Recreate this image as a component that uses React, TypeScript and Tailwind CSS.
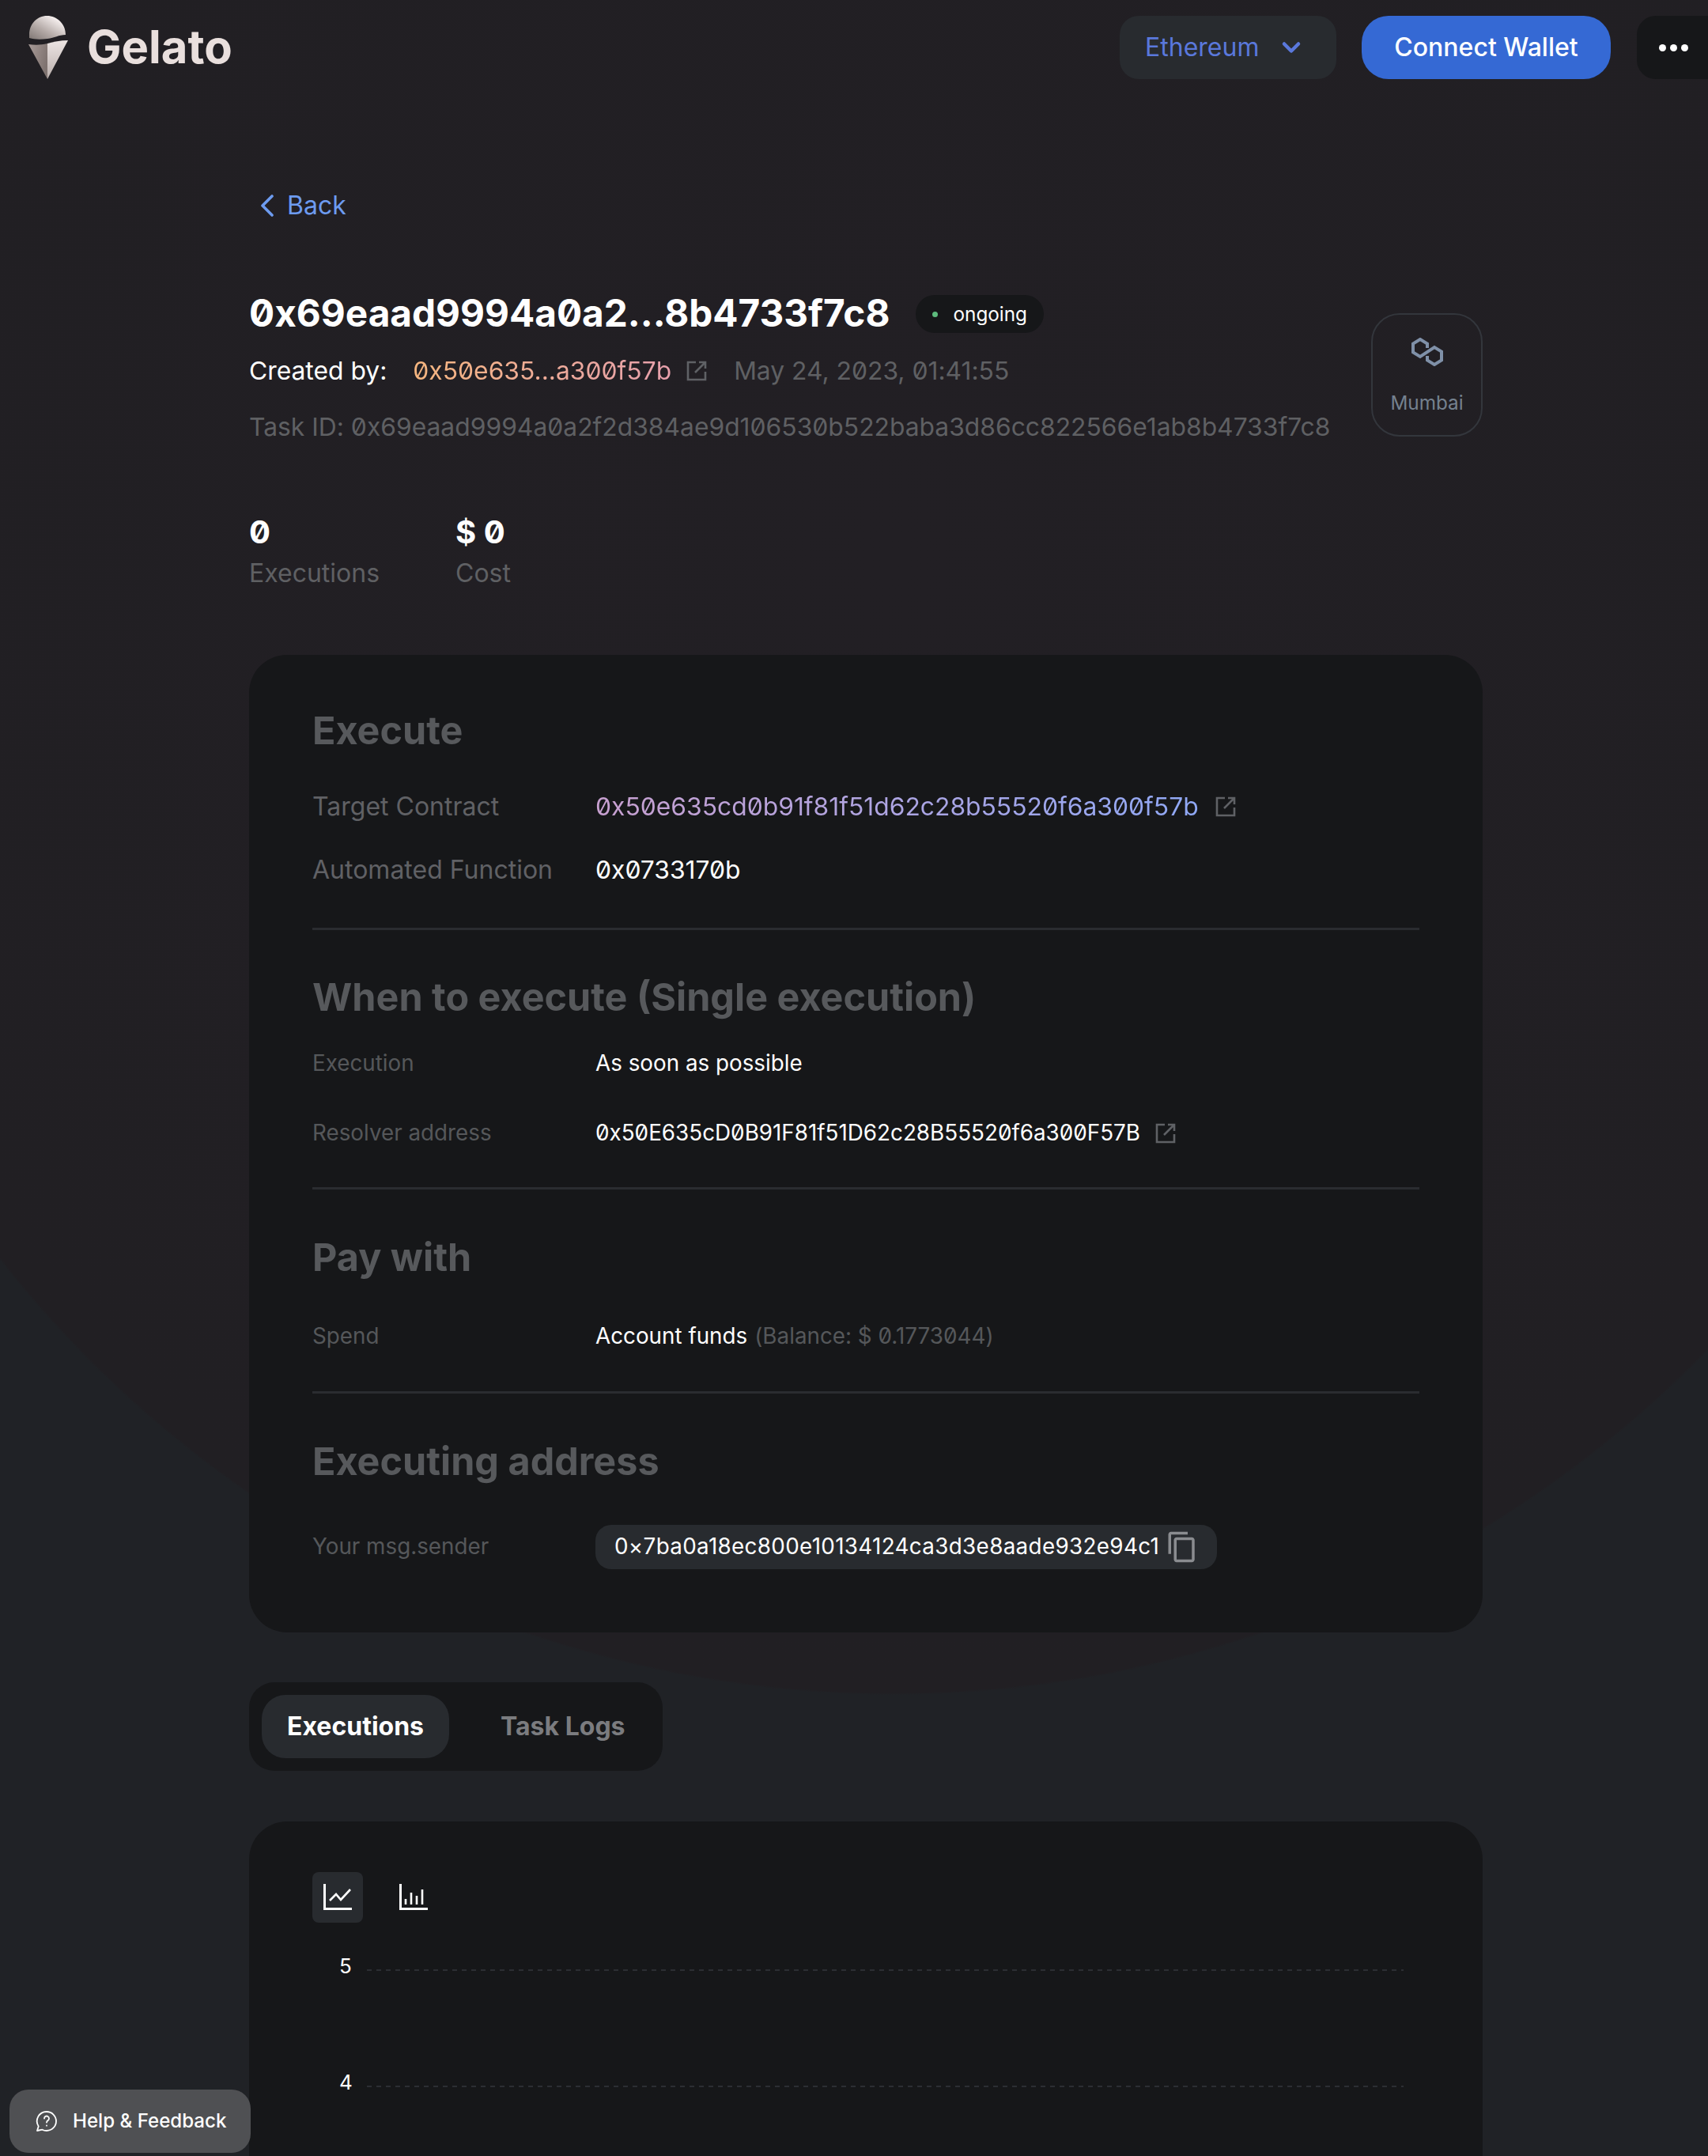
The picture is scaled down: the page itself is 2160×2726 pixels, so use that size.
import { ChevronDown } from 'lucide-react';
import { MdContentCopy } from 'react-icons/md';
import type { ReactNode } from 'react';

const sans = "font-['Inter','Liberation_Sans',sans-serif]";
const hash = "slashed-zero [font-feature-settings:'zero','calt'_0]";

function GelatoLogo() {
  return (
    <svg width="50" height="80" viewBox="0 0 50 80">
      <defs>
        <linearGradient id="dome" x1="0" y1="1" x2="0.85" y2="0.1">
          <stop offset="0" stopColor="#7f7673" />
          <stop offset="0.45" stopColor="#b5aba8" />
          <stop offset="1" stopColor="#fff9f8" />
        </linearGradient>
        <linearGradient id="coneLeft" x1="0" y1="0" x2="1" y2="0.4">
          <stop offset="0" stopColor="#a89b98" />
          <stop offset="1" stopColor="#7f7370" />
        </linearGradient>
        <linearGradient id="coneRight" x1="0" y1="0" x2="0" y2="1">
          <stop offset="0" stopColor="#ece4e3" />
          <stop offset="1" stopColor="#b9aeab" />
        </linearGradient>
      </defs>
      <path d="M1 24C1 10 11 0 23.5 0S47 10 47 24C38 24 33 28 24 29 15 30 8 30 1 28Z" fill="url(#dome)" />
      <path d="M0 36C8 37 16 37 24 35L24 80Z" fill="url(#coneLeft)" />
      <path d="M24 35C32 33 40 31 50 31L24 80Z" fill="url(#coneRight)" />
    </svg>
  );
}

function BackChevron() {
  return (
    <svg width="20" height="30" viewBox="0 0 20 30" fill="none" stroke="#6d9bf0" strokeWidth="3.600" strokeLinecap="round" strokeLinejoin="round">
      <path d="M16 3 4 15l12 12" />
    </svg>
  );
}

function ExternalIcon({ className }: { className?: string }) {
  return (
    <svg viewBox="0 0 28 28" fill="none" stroke="#5f6165" strokeWidth="2.600" className={className}>
      <path d="M13 3H3v22h22V15" />
      <path d="M12 16 25 3M17 3h8v8" />
    </svg>
  );
}

function PolygonIcon() {
  return (
    <svg width="40" height="36" viewBox="0 0 40 36" fill="none" stroke="#7f90a8" strokeWidth="4">
      <path d="M20 13V7.500L11 2 2 7.500v11L11 24l18-12 9 5.500v11L29 34l-9-5.500V23" />
    </svg>
  );
}

function LineChartIcon() {
  return (
    <svg width="36" height="34" viewBox="0 0 36 34" fill="none" stroke="#fff">
      <path d="M1.500 0v31.500H36" strokeWidth="3" />
      <path d="M8 21l8-8 6 7L34 7" strokeWidth="2.600" />
    </svg>
  );
}

function BarChartIcon() {
  return (
    <svg width="36" height="34" viewBox="0 0 36 34" fill="none" stroke="#fff">
      <path d="M1.500 0v31.500H36" strokeWidth="3" />
      <path d="M8 26v-7M15 26V11M22 26V15M29 26V7" strokeWidth="2.600" />
    </svg>
  );
}

function HelpIcon() {
  return (
    <svg width="28" height="28" viewBox="0 0 28 28" fill="none" stroke="#fff" strokeWidth="1.800" strokeLinecap="round" strokeLinejoin="round">
      <path d="M14 2a12 12 0 0 1 0 24c-2 0-4-.400-5.500-1.300L2 26l1.700-5.500A12 12 0 0 1 14 2Z" />
      <path d="M11 10.500a3 3 0 1 1 4.500 2.600c-1 .600-1.500 1.200-1.500 2.400" />
      <path d="M14 19.500v.200" />
    </svg>
  );
}

function Row({ label, height, labelClass, children }: { label: string; height: string; labelClass: string; children: ReactNode }) {
  return (
    <div className={`flex items-center ${height}`}>
      <div className={`w-[358px] shrink-0 ${labelClass}`}>{label}</div>
      {children}
    </div>
  );
}

function Heading({ children, className }: { children: ReactNode; className?: string }) {
  return <h2 className={`text-[48.500px] leading-[58px] font-bold text-[#57595c] ${className ?? ''}`}>{children}</h2>;
}

const small = 'text-[27.800px] text-[#55575a]';
const large = 'text-[32px] text-[#606165]';
const divider = 'h-[3px] bg-[#2a2c30]';
const gridLine = 'mt-[12px] h-[2px] flex-1 bg-[repeating-linear-gradient(90deg,#2c2e33_0,#2c2e33_6px,transparent_6px,transparent_12px)]';

export default function App() {
  return (
    <div className={`relative h-[2726px] overflow-hidden text-white ${sans} bg-[#202226] bg-[radial-gradient(circle_1437px_at_1130px_706px,#221f24_0,#211f23_99.800%,transparent_100%)]`}>
      <header className="flex h-[120px] items-start justify-between pt-5 pl-9">
        <div className="flex items-start">
          <GelatoLogo />
          <span className="ml-[24px] mt-[7px] text-[58px] leading-[64px] font-bold text-[#e9dfdd]">Gelato</span>
        </div>
        <div className="flex">
          <button className="flex h-20 w-[274px] items-center rounded-[24px] bg-[#282b2f] pl-8 text-[32px] text-[#5a78dc]">
            Ethereum
            <ChevronDown className="ml-[23px] h-9 w-9" strokeWidth={3} />
          </button>
          <button className="ml-8 h-20 w-[315px] rounded-[34px] bg-[#3569d4] text-[32px] font-medium text-white">Connect Wallet</button>
          <button className="ml-[33px] flex h-20 w-[90px] items-center gap-[5px] rounded-l-[24px] bg-[#161719] pl-[28px]">
            <span className="h-[9px] w-[9px] rounded-full bg-white" />
            <span className="h-[9px] w-[9px] rounded-full bg-white" />
            <span className="h-[9px] w-[9px] rounded-full bg-white" />
          </button>
        </div>
      </header>

      <main className="ml-[315px] w-[1560px]">
        <a className="mt-[120px] flex h-10 items-center pl-[13px] text-[32px] text-[#6d9bf0]">
          <BackChevron />
          <span className="ml-[15px]">Back</span>
        </a>

        <div className="mt-[88px] flex items-start justify-between">
          <div>
            <div className="flex h-[58px] items-center">
              <h1 className={`text-[47.700px] font-bold text-white ${hash}`}>0x69eaad9994a0a2...8b4733f7c8</h1>
              <span className="ml-[33px] flex h-12 w-[162px] items-center rounded-full bg-[#161719] pl-[21px] text-[24.300px]">
                <span className="h-[7px] w-[7px] rounded-full bg-[#5dbb7d]" />
                <span className="ml-[19px]">ongoing</span>
              </span>
            </div>
            <div className="mt-[23px] flex h-10 items-center text-[31.800px]">
              <span>Created by:</span>
              <span className={`ml-[33px] bg-linear-to-r from-[#f6b67f] to-[#e7a0ac] bg-clip-text text-transparent ${hash}`}>0x50e635...a300f57b</span>
              <ExternalIcon className="ml-[18px] h-[28px] w-[28px]" />
              <span className={`ml-[33px] text-[#5f6063] ${hash}`}>May 24, 2023, 01:41:55</span>
            </div>
            <div className={`mt-[31px] h-10 text-[31.800px] leading-10 text-[#5f6063] ${hash}`}>
              Task ID: 0x69eaad9994a0a2f2d384ae9d106530b522baba3d86cc822566e1ab8b4733f7c8
            </div>
          </div>
          <div className="mt-[28px] flex h-[156px] w-[141px] flex-col items-center rounded-[36px] border-2 border-[#33363c] pt-[29px]">
            <PolygonIcon />
            <span className="mt-[28px] text-[24.300px] text-[#74818f]">Mumbai</span>
          </div>
        </div>

        <div className="mt-[90px] flex">
          <div className="w-[261px]">
            <div className={`text-[40px] leading-[46px] font-bold ${hash}`}>0</div>
            <div className="mt-[9px] text-[32px] leading-10 text-[#5f6063]">Executions</div>
          </div>
          <div>
            <div className={`text-[40px] leading-[46px] font-bold ${hash}`}>$ 0</div>
            <div className="mt-[9px] text-[32px] leading-10 text-[#5f6063]">Cost</div>
          </div>
        </div>

        <section className="mt-[83px] h-[1236px] rounded-[48px] bg-[#161719] px-20 pt-[67px]">
          <Heading>Execute</Heading>
          <div className="mt-[27px]">
            <Row label="Target Contract" height="h-20" labelClass={large}>
              <span className={`bg-linear-to-r from-[#c8a0d0] to-[#8fa8f5] bg-clip-text text-[31.800px] text-transparent ${hash}`}>0x50e635cd0b91f81f51d62c28b55520f6a300f57b</span>
              <ExternalIcon className="ml-[20px] h-[28px] w-[28px]" />
            </Row>
            <Row label="Automated Function" height="h-20" labelClass={large}>
              <span className={`text-[31.800px] ${hash}`}>0x0733170b</span>
            </Row>
          </div>
          <div className={`mt-[33px] ${divider}`} />

          <Heading className="mt-[56px]">When to execute (Single execution)</Heading>
          <div className="mt-[11px]">
            <Row label="Execution" height="h-[88px]" labelClass={small}>
              <span className="text-[27.800px]">As soon as possible</span>
            </Row>
            <Row label="Resolver address" height="h-[88px]" labelClass={small}>
              <span className={`text-[27.800px] ${hash}`}>0x50E635cD0B91F81f51D62c28B55520f6a300F57B</span>
              <ExternalIcon className="ml-[18px] h-[28px] w-[28px]" />
            </Row>
          </div>
          <div className={`mt-[24px] ${divider}`} />

          <Heading className="mt-[57px]">Pay with</Heading>
          <div className="mt-[27px]">
            <Row label="Spend" height="h-[88px]" labelClass={small}>
              <span className="text-[27.800px]">Account funds</span>
              <span className={`ml-[9px] text-[27.800px] text-[#55575a] ${hash}`}>(Balance: $ 0.1773044)</span>
            </Row>
          </div>
          <div className={`mt-[25px] ${divider}`} />

          <Heading className="mt-[57px]">Executing address</Heading>
          <div className="mt-[51px] flex items-center">
            <div className={`w-[358px] shrink-0 ${small}`}>Your msg.sender</div>
            <div className="flex h-14 w-[786px] items-center rounded-[20px] bg-[#282b2f] pl-6 text-[27.800px] text-white">
              <span className="tracking-[0.330px]">0×7ba0a18ec800e10134124ca3d3e8aade932e94c1</span>
              <MdContentCopy className="ml-[8px] h-[42px] w-[42px] shrink-0 text-[#8a8c90]" />
            </div>
          </div>
        </section>

        <div className="mt-[63px] flex h-28 w-[523px] items-center rounded-[32px] bg-[#161719] px-4">
          <button className="h-20 w-[237px] rounded-[30px] bg-[#282b2f] text-[32px] font-bold text-white">Executions</button>
          <button className="ml-[65px] text-[32px] font-bold text-[#7b7c7f]">Task Logs</button>
        </div>

        <section className="mt-[64px] h-[600px] rounded-[48px] bg-[#161719] px-20 pt-[64px]">
          <div className="flex items-center">
            <button className="flex h-16 w-16 items-center justify-center rounded-lg bg-[#282b2f]">
              <LineChartIcon />
            </button>
            <button className="ml-[39px] flex h-16 w-[50px] items-center justify-center">
              <BarChartIcon />
            </button>
          </div>
          <div className="mt-[42px] w-[1380px]">
            <div className="flex h-[24px] items-center text-[26px]">
              <span className="ml-[34px] w-[35px]">5</span>
              <div className={gridLine} />
            </div>
            <div className="mt-[123px] flex h-[24px] items-center text-[26px]">
              <span className="ml-[34px] w-[35px]">4</span>
              <div className={gridLine} />
            </div>
          </div>
        </section>
      </main>

      <button className="absolute bottom-[4px] left-3 flex h-20 w-[305px] items-center rounded-[24px] bg-[#4f5053] pl-[33px] text-[24.100px] font-medium text-white">
        <HelpIcon />
        <span className="ml-[19px]">Help &amp; Feedback</span>
      </button>
    </div>
  );
}
